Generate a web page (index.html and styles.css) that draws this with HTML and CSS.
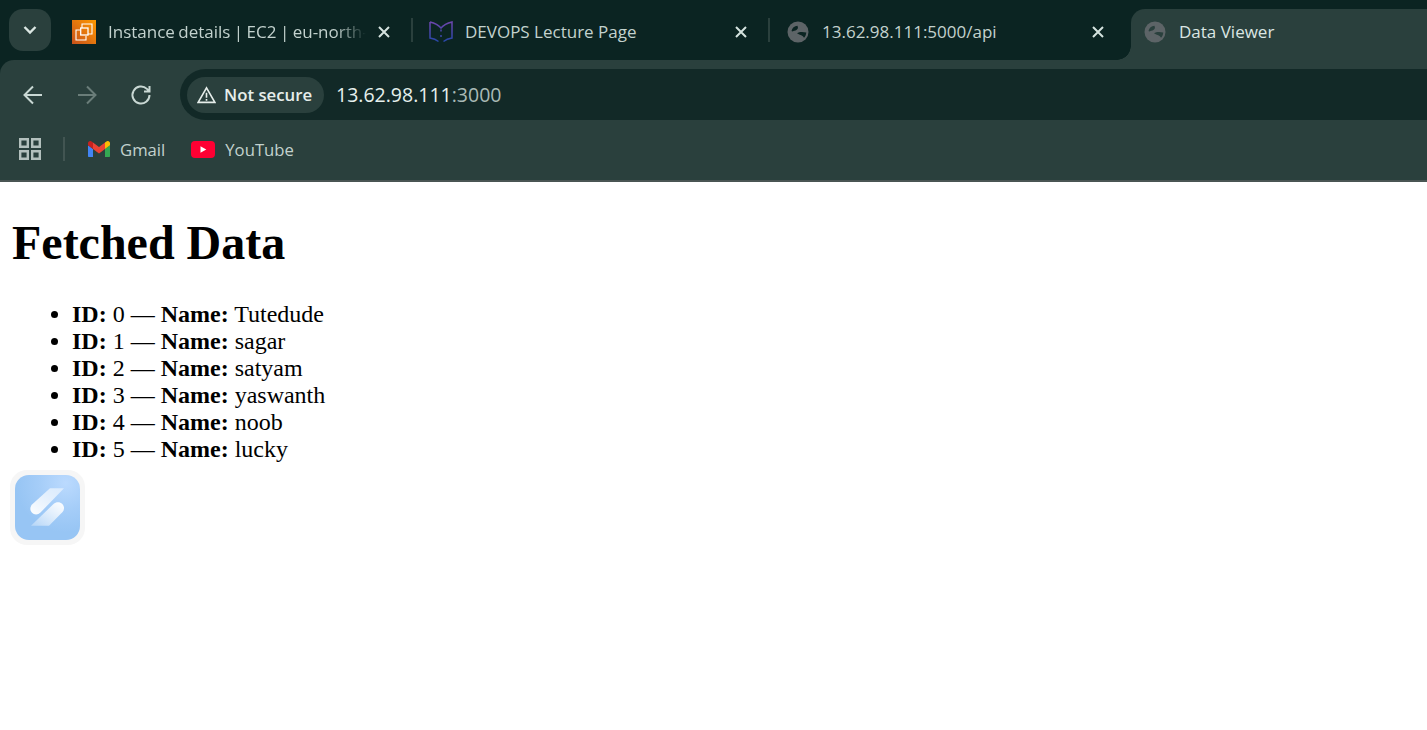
FILE: index.html
```html
<!DOCTYPE html>
<html lang="en">
<head>
<meta charset="utf-8">
<title>Data Viewer</title>
<link rel="stylesheet" href="styles.css">
</head>
<body>
<header class="chrome">
  <div class="tabstrip">
    <button class="tab-search" aria-label="Search tabs">
      <svg width="16" height="16" viewBox="0 0 16 16"><path d="M2.500 5 8 10.500 13.500 5" fill="none" stroke="#dbe7e3" stroke-width="2.400"/></svg>
    </button>
    <div class="tab tab-divided">
      <svg class="favicon" viewBox="0 0 24 24">
        <defs><linearGradient id="ec2" x1="0" y1="1" x2="1" y2="0"><stop offset="0" stop-color="#c8511b"/><stop offset="1" stop-color="#ff9900"/></linearGradient></defs>
        <rect width="24" height="24" fill="url(#ec2)"/>
        <path d="M10 8V4h10v10h-4M8 10H4v10h10v-4" fill="none" stroke="#fff" stroke-width="1.100"/>
        <rect x="8.700" y="8" width="7.300" height="7" fill="none" stroke="#fff" stroke-width="1.300"/>
      </svg>
      <span class="tab-title tab-title-fade">Instance details | EC2 | eu-north-1</span>
      <svg class="close" viewBox="0 0 12 12"><path d="M1 1l10 10M11 1 1 11"/></svg>
    </div>
    <div class="tab tab-divided">
      <svg class="favicon" viewBox="0 0 24 24">
        <defs><linearGradient id="book" x1="0" y1="0" x2="0" y2="1"><stop offset="0" stop-color="#6d46ad"/><stop offset="1" stop-color="#2747a8"/></linearGradient></defs>
        <path d="M1 2C5 3 9 4.500 12 8 15 4.500 19 3 23 2V18C20 18.500 17 19.500 14.500 21.500M1 2V18C4 18.500 7 19.500 9.500 21.500M12 9.500v2M12 15v2" fill="none" stroke="url(#book)" stroke-width="1.500"/>
      </svg>
      <span class="tab-title">DEVOPS Lecture Page</span>
      <svg class="close" viewBox="0 0 12 12"><path d="M1 1l10 10M11 1 1 11"/></svg>
    </div>
    <div class="tab">
      <svg class="favicon" viewBox="0 0 24 24"><circle class="globe" cx="12" cy="12" r="10.500"/><path class="land-dark" d="M5.500 11C6 8 8.500 6 11.500 5.800L12 8C11 10 10 10.500 8.500 10.800 7.500 11 6.500 12 5.500 11zM11 13.200C13 12 16 11.500 20.300 12.500 20 14.500 19.500 16.500 18 17.700 17 15.500 14 15 11 13.200z"/></svg>
      <span class="tab-title">13.62.98.111:5000/api</span>
      <svg class="close" viewBox="0 0 12 12"><path d="M1 1l10 10M11 1 1 11"/></svg>
    </div>
    <div class="tab tab-active">
      <svg class="favicon" viewBox="0 0 24 24"><circle class="globe" cx="12" cy="12" r="10.500"/><path class="land-light" d="M5.500 11C6 8 8.500 6 11.500 5.800L12 8C11 10 10 10.500 8.500 10.800 7.500 11 6.500 12 5.500 11zM11 13.200C13 12 16 11.500 20.300 12.500 20 14.500 19.500 16.500 18 17.700 17 15.500 14 15 11 13.200z"/></svg>
      <span class="tab-title tab-title-active">Data Viewer</span>
    </div>
  </div>
  <div class="toolbar">
    <div class="navrow">
      <div class="navicons">
        <svg class="nav" viewBox="0 0 24 24"><path d="M21 12H4M12 3.500 3.500 12l8.500 8.500"/></svg>
        <svg class="nav nav-off" viewBox="0 0 24 24"><path d="M3 12h17M12 3.500l8.500 8.500-8.500 8.500"/></svg>
        <svg class="nav" viewBox="0 0 24 24"><path d="M20.500 12a8.500 8.500 0 1 1-2.600-6.100L20.500 8.500M20.500 3v5.500h-5.500"/></svg>
      </div>
      <div class="omnibox">
        <div class="chip">
          <svg class="warn" viewBox="0 0 20 18"><path d="M10 1.500 1.200 16.800h17.600z" fill="none" stroke="#e6eeeb" stroke-width="1.700"/><path d="M10 6.500v5.500M10 13.200v1.800" stroke="#e6eeeb" stroke-width="1.700"/></svg>
          <span class="chip-text">Not secure</span>
        </div>
        <span class="url">13.62.98.111<span class="url-port">:3000</span></span>
      </div>
    </div>
    <nav class="bookmarks">
      <svg class="apps" viewBox="0 0 22 22"><path d="M1.200 1.200h7.600v7.600H1.200zM13.200 1.200h7.600v7.600h-7.600zM1.200 13.200h7.600v7.600H1.200zM13.200 13.200h7.600v7.600h-7.600z"/></svg>
      <span class="bm-divider"></span>
      <a class="bm bm-gmail">
        <svg class="gmail" viewBox="52 42 88 66">
          <path fill="#4285f4" d="M58 108h14V74L52 59v43c0 3.320 2.690 6 6 6"/>
          <path fill="#34a853" d="M120 108h14c3.320 0 6-2.690 6-6V59l-20 15"/>
          <path fill="#fbbc04" d="M120 48v26l20-15v-8c0-7.420-8.470-11.650-14.400-7.200"/>
          <path fill="#ea4335" d="M72 74V48l24 18 24-18v26L96 92"/>
          <path fill="#c5221f" d="M52 51v8l20 15V48l-5.600-4.200c-5.940-4.450-14.400-.22-14.400 7.200"/>
        </svg>
        Gmail
      </a>
      <a class="bm">
        <svg class="youtube" viewBox="0 0 24 17"><rect width="24" height="17" rx="4" fill="#ff0033"/><path d="M9.500 5.200v6.600l5.800-3.300z" fill="#fff"/></svg>
        YouTube
      </a>
    </nav>
  </div>
</header>
<main class="page">
  <h1>Fetched Data</h1>
  <ul>
    <li><strong>ID:</strong> 0 — <strong>Name:</strong> Tutedude</li>
    <li><strong>ID:</strong> 1 — <strong>Name:</strong> sagar</li>
    <li><strong>ID:</strong> 2 — <strong>Name:</strong> satyam</li>
    <li><strong>ID:</strong> 3 — <strong>Name:</strong> yaswanth</li>
    <li><strong>ID:</strong> 4 — <strong>Name:</strong> noob</li>
    <li><strong>ID:</strong> 5 — <strong>Name:</strong> lucky</li>
  </ul>
  <div class="float-ext">
    <svg viewBox="0 0 65 65" width="65" height="65">
      <defs>
        <linearGradient id="up" x1="1" y1="0" x2="0" y2="1"><stop offset="0" stop-color="#fff" stop-opacity=".5"/><stop offset="1" stop-color="#fff" stop-opacity=".98"/></linearGradient>
        <linearGradient id="low" x1="1" y1="0" x2="0" y2="1"><stop offset="0" stop-color="#fff" stop-opacity=".98"/><stop offset="1" stop-color="#fff" stop-opacity=".3"/></linearGradient>
      </defs>
      <path fill="url(#up)" d="M35 13.300H49L25.500 37.500c-2.700 2.700-6.500 2.500-8.700 0s-1.800-5.800.5-8.200z"/>
      <path fill="url(#low)" d="M16 50.700 38.500 29c2.500-2.300 6.500-2.300 8.800 0s2.300 5.800 0 8.200L34 50.700z"/>
    </svg>
  </div>
</main>
</body>
</html>
```
FILE: styles.css
```css
* { box-sizing: border-box; }
html, body { margin: 0; height: 100%; overflow: hidden; background: #fff; }
body { display: flex; flex-direction: column; height: 730px; }

.chrome {
  background: #0b2422;
  font-family: "Open Sans", "Noto Sans", sans-serif;
  color: #c3d2ce;
  border-bottom: 2px solid #4a5553;
  flex: none;
}

.tabstrip { display: flex; height: 60px; align-items: flex-end; }
.tab-search {
  flex: none;
  width: 42px;
  height: 42px;
  margin: 0 4px 9px 9px;
  padding: 0;
  border: 0;
  border-radius: 14px;
  background: #2a403d;
  display: flex;
  align-items: center;
  justify-content: center;
}
.tab {
  position: relative;
  flex: none;
  width: 357px;
  height: 51px;
  padding: 0 16px 6px 17px;
  display: flex;
  align-items: center;
  gap: 12px;
}
.tab-divided::after {
  content: "";
  position: absolute;
  right: -1px;
  top: 9px;
  width: 2px;
  height: 24px;
  background: #2a403d;
}
.tab-active {
  flex: 1;
  width: auto;
  margin-left: 5px;
  padding-left: 12px;
  background: #2a403d;
  border-radius: 14px 0 0 0;
}
.tab-active::before {
  content: "";
  position: absolute;
  left: -14px;
  bottom: 0;
  width: 14px;
  height: 14px;
  background: radial-gradient(circle at 0 0, transparent 13.500px, #2a403d 14px);
}
.favicon { flex: none; width: 24px; height: 24px; }
.globe { fill: #5d6467; }
.land-dark { fill: #0b2422; }
.land-light { fill: #2a403d; }
.tab-title {
  flex: 1;
  min-width: 0;
  white-space: nowrap;
  overflow: hidden;
  font-size: 17px;
  line-height: 24px;
  padding-top: 1px;
}
.tab-title-fade {
  word-spacing: -1px;
  -webkit-mask-image: linear-gradient(90deg, #000 88%, transparent 100%);
  mask-image: linear-gradient(90deg, #000 88%, transparent 100%);
}
.tab-title-active { color: #dbe6e3; }
.close { flex: none; width: 12px; height: 12px; margin-right: 6px; fill: none; stroke: #d5e3df; stroke-width: 2; }

.toolbar {
  background: #2a403d;
  border-radius: 14px 0 0 0;
  height: 120px;
  padding-top: 9px;
}
.navrow { display: flex; align-items: center; height: 51px; }
.navicons { flex: none; width: 180px; display: flex; align-items: center; gap: 30px; padding-left: 21px; }
.nav { width: 24px; height: 24px; fill: none; stroke: #c9d8d4; stroke-width: 2; }
.nav-off { stroke: #6a7d79; }
.omnibox {
  flex: 1;
  height: 51px;
  background: #122927;
  border-radius: 26px 0 0 26px;
  display: flex;
  align-items: center;
  padding-left: 7px;
  gap: 12px;
}
.chip {
  height: 36px;
  width: 137px;
  border-radius: 18px;
  background: #2a403d;
  display: flex;
  align-items: center;
  gap: 8px;
  padding-left: 10px;
}
.warn { width: 19px; height: 18px; flex: none; }
.chip-text { font-size: 16.800px; font-weight: 600; color: #e6eeeb; white-space: nowrap; }
.url { font-size: 19.500px; color: #e6f0ed; white-space: nowrap; }
.url-port { color: #a9bab6; }

.bookmarks { display: flex; align-items: center; height: 58px; padding-left: 19px; }
.apps { width: 22px; height: 22px; fill: none; stroke: #b3c0bd; stroke-width: 2.400; flex: none; }
.bm-divider { width: 2px; height: 24px; background: #425552; margin: 0 23px 0 22px; flex: none; }
.bm { display: flex; align-items: center; gap: 10px; font-size: 16.700px; color: #c3d2ce; }
.bm-gmail { margin-right: 26px; }
.gmail { width: 22px; height: 16.500px; flex: none; }
.youtube { width: 24px; height: 17px; flex: none; }

.page {
  position: relative;
  flex: 1;
  padding: 0 12px;
  font-family: "Liberation Serif", serif;
  font-size: 24px;
  line-height: 27px;
  color: #000;
}
h1 { font-size: 48px; line-height: 55px; margin: 33px 0 31px; }
ul { margin: 0; padding-left: 60px; }
.float-ext {
  position: absolute;
  left: 10px;
  top: 288px;
  width: 75px;
  height: 75px;
  padding: 5px;
  border-radius: 17px;
  background: #f6f6f6;
}
.float-ext svg {
  display: block;
  border-radius: 14px;
  background: radial-gradient(circle at 78% 12%, #bbdafe 0%, #a5cdf8 35%, #97c5f4 65%);
}
```
